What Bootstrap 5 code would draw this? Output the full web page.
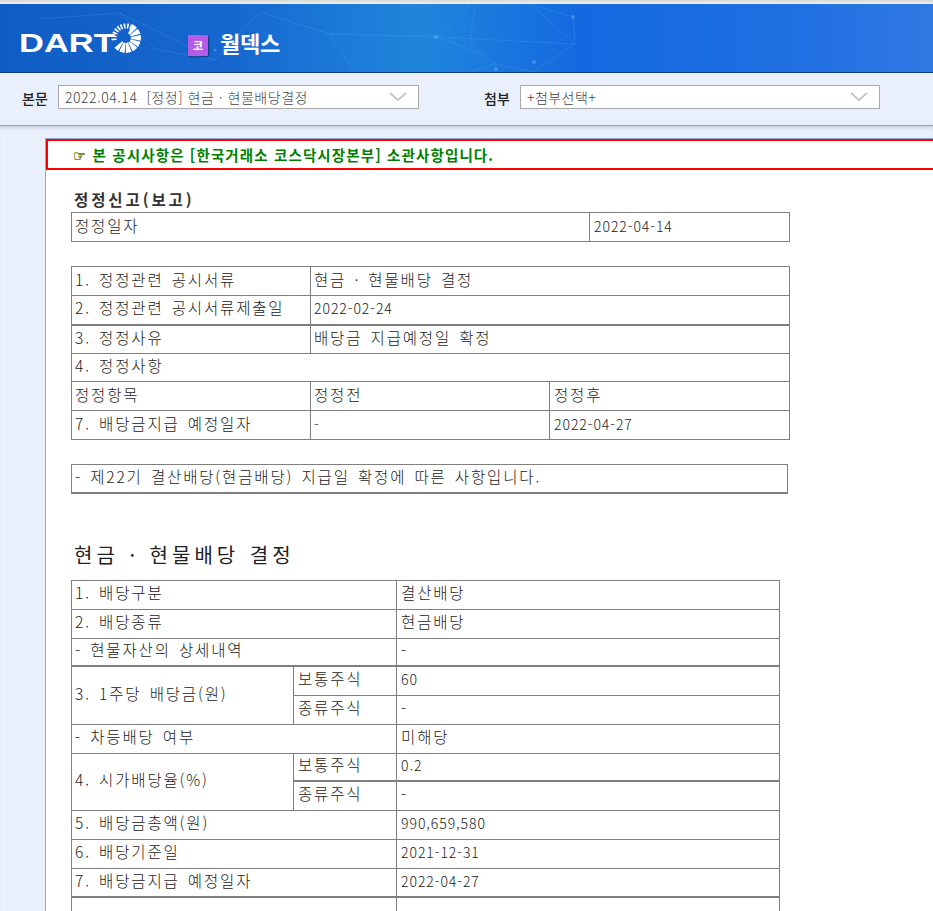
<!doctype html>
<html lang="ko">
<head>
<meta charset="utf-8">
<title>DART</title>
<link href="https://cdn.jsdelivr.net/npm/bootstrap@5.3.0/dist/css/bootstrap.min.css" rel="stylesheet">
<style>
html,body{height:100%;}
body{margin:0;background:#fff;overflow:hidden;font-family:"Noto Sans CJK KR","Liberation Sans",sans-serif;color:#333;}
.top-strip{height:4px;background:linear-gradient(#d8d8d8,#f0f0f0);}
.hero{height:69px;background:linear-gradient(90deg,#0f5cc4 0%,#1668d0 25%,#1f86dc 45%,#1469e0 62%,#1f6fe2 85%,#3079e4 100%);border-bottom:1px solid #0d3f80;position:relative;overflow:hidden;}
.hero-net{position:absolute;inset:0;}
.brand{position:relative;width:140px;height:40px;margin-left:20px;margin-top:19px;flex:none;}
.brand-word{position:absolute;left:-1px;top:7px;font:700 26.5px/26px "Liberation Sans",sans-serif;color:#fff;transform:scaleX(1.3);transform-origin:left top;}
.brand-sun{position:absolute;left:90px;top:0;}
.tag-co{width:20px;height:21px;background:#b65ae8;color:#fff;font-size:11px;font-weight:700;line-height:21px;text-align:center;border-radius:1px;box-shadow:1px 1px 2px rgba(0,0,30,.5);margin-left:28px;margin-top:31px;flex:none;}
.corp{color:#fff;font-size:22px;font-weight:700;line-height:30px;margin-left:12px;margin-top:23px;letter-spacing:-.3px;}
.filter-bar{height:53px;background:#e9effb;border-bottom:1px solid #8aa0cc;padding-top:12px;}
.filter-label{font-size:14px;font-weight:500;color:#222;width:36px;margin-left:22px;line-height:26px;}
.filter-label.second{margin-left:65px;}
.pick{width:361px;height:24px;border:1px solid #a9a9a9;border-radius:0;padding:0 40px 0 6px;font-size:14px;font-weight:300;letter-spacing:.55px;line-height:22px;color:#444;
background-color:#fff;background-image:url("data:image/svg+xml,%3Csvg xmlns='http://www.w3.org/2000/svg' viewBox='0 0 18 10'%3E%3Cpath d='M1 1l8 7 8-7' fill='none' stroke='%23c4c4c4' stroke-width='1.7'/%3E%3C/svg%3E");background-position:right 11px center;background-size:18px 10px;}
.pick.narrow{width:360px;letter-spacing:.45px;}
.pick:focus{border-color:#a9a9a9;box-shadow:none;}
.stage{background:#e9effb;padding:12px 0 0 45px;height:calc(100% - 126px);box-shadow:inset 0 4px 4px -3px rgba(60,80,130,.25);}
.paper{background:#fff;border-left:1px solid #8fa9d8;border-top:1px solid #8fa9d8;height:100%;overflow:hidden;}
.notice{height:31px;border:2px solid #f00;border-right:0;padding-left:25px;font-size:14.5px;font-weight:700;line-height:27px;color:#008000;letter-spacing:1.13px;white-space:nowrap;}
.hand{color:#6f7a1a;font-weight:400;letter-spacing:1.4px;font-family:"DejaVu Sans",sans-serif;-webkit-text-stroke:.35px #6f7a1a;}
.doc-body{padding-left:25px;}
.h-report{font-size:15.5px;font-weight:700;color:#333;line-height:20px;margin:19px 0 3px 3px;letter-spacing:2.9px;}
.h-main{font-size:20px;font-weight:400;color:#222;line-height:28px;margin:47px 0 11px 3px;letter-spacing:4px;word-spacing:1px;}
.sheet{border-collapse:collapse;table-layout:fixed;font-size:15.5px;font-weight:300;color:#222;letter-spacing:1.85px;word-spacing:2px;margin-bottom:24px;}
.sheet td{border:1px solid #7f7f7f;height:29px;padding:0 3px 5px;line-height:20px;white-space:nowrap;overflow:hidden;}
.sheet td.num{letter-spacing:.95px;font-size:14px;padding-bottom:3px;}
.sheet td.cellx{padding-left:4px;}
.sheet tr.tight td{height:28px;}
.sheet tr.heavy td{border-top-width:2px;}
.sheet td.heavy-top{border-top-width:2px;}
.sheet td.heavy-bot{border-bottom-width:2px;}
.w718{width:718px;}
.w717{width:717px;}
.w708{width:708px;}
</style>
</head>
<body>
<div class="top-strip"></div>
<header class="hero d-flex">
<svg class="hero-net" width="933" height="68" viewBox="0 0 933 68" fill="none" stroke="#7fc0f5" stroke-opacity=".16" stroke-width="1">
<path d="M38 15L120 9 215 56 260 8 330 30 438 33 480 50M120 9L155 45 215 56M330 30L355 68M438 33L575 40 533 68M438 33L470 0M575 40L530 0 573 13 575 40M533 68L495 60 470 40 475 0M495 60L470 68"/>
<g fill="#9fd0f8" fill-opacity=".3" stroke="none"><circle cx="436" cy="33" r="2"/><circle cx="573" cy="13" r="2"/><circle cx="534" cy="58" r="2"/><circle cx="496" cy="65" r="2"/><circle cx="120" cy="25" r="1.5"/><circle cx="215" cy="46" r="1.5"/></g>
</svg>
<div class="brand">
<span class="brand-word">DART</span>
<svg class="brand-sun" width="32" height="32" viewBox="0 0 32 32" fill="none" stroke="#fff">
<path d="M4.2 17.100A12 12 0 0 1 21.100 4.100" stroke-width="5" stroke-dasharray="1.6 1.5"/>
<path d="M20.200 5.900A10 10 0 1 1 8.340 21.430" stroke-width="10" stroke-dasharray="3.800 .8"/>
</svg>
</div>
<div class="tag-co">코</div>
<div class="corp">월덱스</div>
</header>
<form class="filter-bar d-flex align-items-start">
<label class="filter-label">본문</label>
<select class="form-select pick" aria-label="본문"><option>2022.04.14 &nbsp;[정정] 현금 · 현물배당결정</option></select>
<label class="filter-label second">첨부</label>
<select class="form-select pick narrow" aria-label="첨부"><option>+첨부선택+</option></select>
</form>
<main class="stage">
<div class="paper">
<div class="notice"><span class="hand">☞</span> 본 공시사항은 [한국거래소 코스닥시장본부] 소관사항입니다.</div>
<div class="doc-body">
<div class="h-report">정정신고(보고)</div>
<table class="sheet w718">
<colgroup><col style="width:518px"><col style="width:200px"></colgroup>
<tr><td>정정일자</td><td class="num cellx">2022-04-14</td></tr>
</table>
<table class="sheet w718">
<colgroup><col style="width:239px"><col style="width:239px"><col style="width:240px"></colgroup>
<tr><td>1. 정정관련 공시서류</td><td colspan="2">현금 · 현물배당 결정</td></tr>
<tr><td>2. 정정관련 공시서류제출일</td><td colspan="2" class="num">2022-02-24</td></tr>
<tr class="heavy"><td>3. 정정사유</td><td colspan="2">배당금 지급예정일 확정</td></tr>
<tr class="tight"><td colspan="3">4. 정정사항</td></tr>
<tr><td>정정항목</td><td>정정전</td><td class="cellx">정정후</td></tr>
<tr><td>7. 배당금지급 예정일자</td><td class="num">-</td><td class="num cellx">2022-04-27</td></tr>
</table>
<table class="sheet w717">
<tr class="tight"><td class="heavy-bot">- 제22기 결산배당(현금배당) 지급일 확정에 따른 사항입니다.</td></tr>
</table>
<div class="h-main">현금 · 현물배당 결정</div>
<table class="sheet w708">
<colgroup><col style="width:222px"><col style="width:103px"><col style="width:383px"></colgroup>
<tr><td colspan="2">1. 배당구분</td><td class="cellx">결산배당</td></tr>
<tr><td colspan="2">2. 배당종류</td><td class="cellx">현금배당</td></tr>
<tr class="tight"><td colspan="2">- 현물자산의 상세내역</td><td class="cellx">-</td></tr>
<tr class="heavy"><td rowspan="2">3. 1주당 배당금(원)</td><td class="cellx">보통주식</td><td class="num cellx">60</td></tr>
<tr><td class="cellx">종류주식</td><td class="cellx">-</td></tr>
<tr><td colspan="2">- 차등배당 여부</td><td class="cellx">미해당</td></tr>
<tr class="tight"><td rowspan="2">4. 시가배당율(%)</td><td class="cellx">보통주식</td><td class="num cellx">0.2</td></tr>
<tr><td class="cellx heavy-top">종류주식</td><td class="cellx heavy-top">-</td></tr>
<tr><td colspan="2">5. 배당금총액(원)</td><td class="num cellx">990,659,580</td></tr>
<tr><td colspan="2">6. 배당기준일</td><td class="num cellx">2021-12-31</td></tr>
<tr><td colspan="2">7. 배당금지급 예정일자</td><td class="num cellx">2022-04-27</td></tr>
<tr class="heavy"><td colspan="2"></td><td></td></tr>
</table>
</div>
</div>
</main>
<script src="https://cdn.jsdelivr.net/npm/bootstrap@5.3.0/dist/js/bootstrap.bundle.min.js"></script>
</body>
</html>
